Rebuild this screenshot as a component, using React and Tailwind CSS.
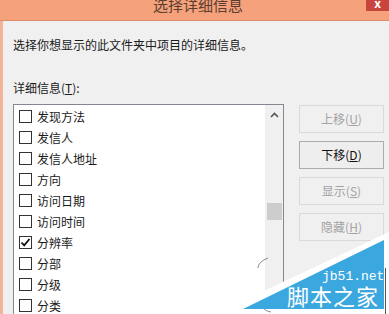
import React from "react";

const items = [
  { label: "发现方法" },
  { label: "发信人" },
  { label: "发信人地址" },
  { label: "方向" },
  { label: "访问日期" },
  { label: "访问时间" },
  { label: "分辨率", checked: true },
  { label: "分部" },
  { label: "分级" },
  { label: "分类" },
];

function Check({ checked }) {
  return (
    <div className="w-[13px] h-[13px] border border-[#333333] bg-white flex items-center justify-center shrink-0">
      {checked && (
        <svg width="11" height="11" viewBox="0 0 11 11">
          <path d="M1.5 5.5 L4.2 8.3 L9.5 2" stroke="#111" strokeWidth="1.8" fill="none" />
        </svg>
      )}
    </div>
  );
}

function Btn({ children, enabled }) {
  return (
    <div
      className={
        "w-[85px] h-[28px] flex items-center justify-center text-[12px] " +
        (enabled
          ? "border border-[#acacac] bg-[#eeeeee] text-[#111111]"
          : "border border-[#d9d9d9] bg-[#f0f0f0] text-[#a3a3a3]")
      }
    >
      {children}
    </div>
  );
}

export default function App() {
  return (
    <div
      className="relative w-[389px] h-[314px] overflow-hidden bg-[#f0f0f0] flex flex-col"
      style={{ fontFamily: '"Noto Sans CJK SC", "Microsoft YaHei", sans-serif' }}
    >
      {/* title bar */}
      <div className="h-[21px] shrink-0 bg-[#f4a17c] border-b border-[#df8d68] flex items-start">
        <div className="flex-1 flex justify-center pl-[30px]">
          <span className="text-[15px] leading-[15px] -mt-[3px] text-[#5a3d2e]">选择详细信息</span>
        </div>
        <div className="w-[23px] h-[11px] bg-[#c8443c] flex items-start justify-center">
          <span className="text-[12px] leading-[10px] -mt-[2px] text-white font-bold">x</span>
        </div>
      </div>

      {/* body */}
      <div className="flex-1 border-l-[3px] border-[#f2b497] pl-[10px] flex flex-col text-[12px] text-[#1a1a1a]">
        <div className="mt-[16px] leading-[16px]">选择你想显示的此文件夹中项目的详细信息。</div>
        <div className="mt-[27px] leading-[16px]">
          详细信息(<span className="underline">T</span>):
        </div>
        <div className="mt-[8px] flex items-start">
          {/* list box */}
          <div className="w-[271px] h-[240px] border border-[#828790] bg-white flex">
            <div className="flex-1 pt-[1px] flex flex-col">
              {items.map((it) => (
                <div key={it.label} className="h-[21px] flex items-center pl-[5px] gap-[5px]">
                  <Check checked={it.checked} />
                  <span className="leading-[16px]">{it.label}</span>
                </div>
              ))}
            </div>
            <div className="w-[18px] bg-[#f0f0f0] flex flex-col items-center">
              <svg className="mt-[7px]" width="9" height="6" viewBox="0 0 9 6">
                <path d="M1 5 L4.5 1.5 L8 5" stroke="#555" strokeWidth="1.6" fill="none" />
              </svg>
              <div className="mt-[85px] w-[15px] h-[17px] bg-[#cdcdcd]" />
            </div>
          </div>
          {/* buttons */}
          <div className="ml-[15px] mt-[1px] flex flex-col gap-[8px]">
            <Btn>上移(<span className="underline">U</span>)</Btn>
            <Btn enabled>下移(<span className="underline">D</span>)</Btn>
            <Btn>显示(<span className="underline">S</span>)</Btn>
            <Btn>隐藏(<span className="underline">H</span>)</Btn>
          </div>
        </div>
      </div>

      {/* watermark overlay */}
      <svg className="absolute left-0 top-0 pointer-events-none" width="389" height="314" viewBox="0 0 389 314">
        <polygon points="389,232 215,314 389,314" fill="#ffffff" />
        <path d="M268 258 Q258 262 258 268" stroke="#8a8a8a" strokeWidth="1" fill="none" />
        <path d="M262 306 Q264 311 271 312" stroke="#8a8a8a" strokeWidth="1" fill="none" />
        <polygon points="384,240 243,309 384,309" fill="#3ba7df" />
        <line x1="385.5" y1="268" x2="385.5" y2="314" stroke="#555" strokeWidth="1" />
      </svg>
      <div
        className="absolute left-[322px] top-[271px] text-[13px] leading-[12px] text-white"
        style={{ fontFamily: '"Liberation Mono", monospace' }}
      >
        jb51.net
      </div>
      <div className="absolute left-[287px] top-[284px] text-[22px] leading-[22px] tracking-[1px] text-white">
        脚本之家
      </div>
    </div>
  );
}
